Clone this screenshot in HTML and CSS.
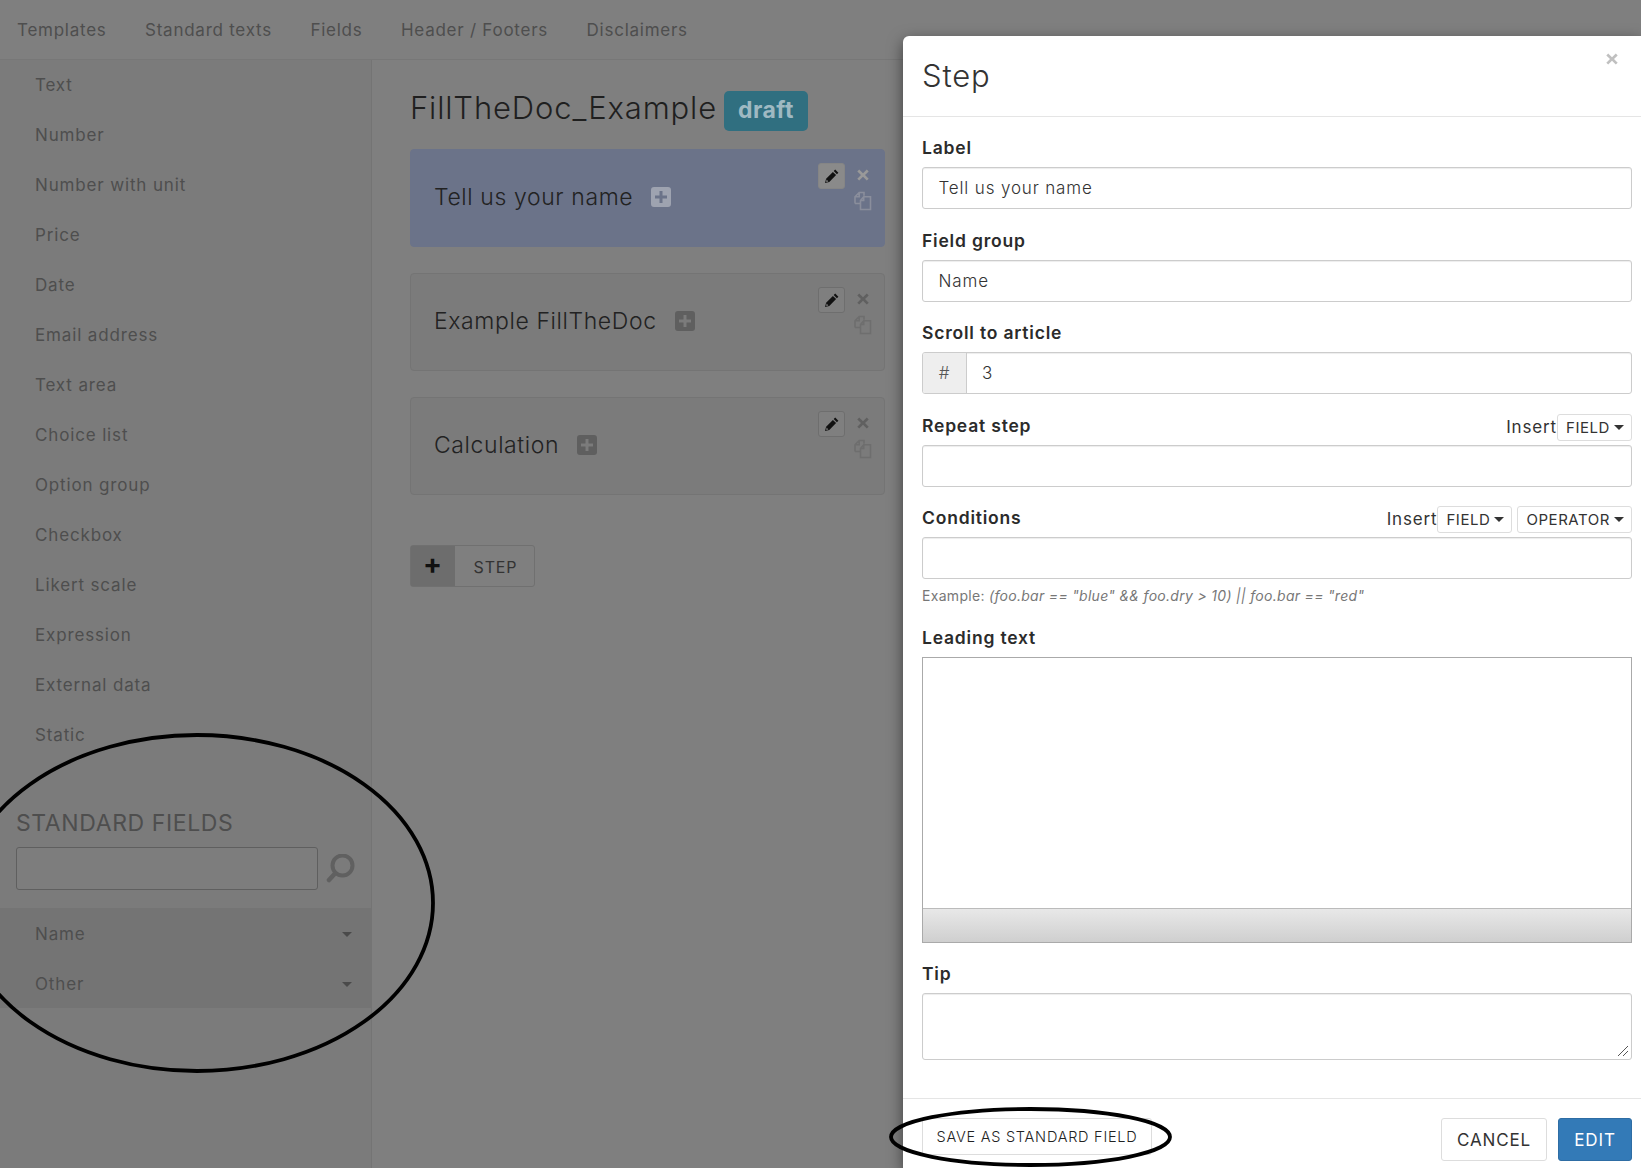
FILE: index.html
```html
<!DOCTYPE html>
<html lang="en">
<head>
<meta charset="utf-8">
<title>FillTheDoc - Step</title>
<link rel="stylesheet" href="styles.css">
</head>
<body>
<svg class="defs" width="0" height="0" aria-hidden="true">
  <symbol id="pencil" viewBox="0 0 16 16"><path d="M11.200 1.600l3.200 3.200-1.500 1.500-3.200-3.200zM8.900 3.900l3.200 3.200-6.800 6.800-4.300 1.100 1.100-4.300zM2.600 11.600l1.800 1.800-2.200.5z" fill-rule="evenodd"/></symbol>
  <symbol id="times" viewBox="0 0 14 14"><path d="M3.200 1.500L7 5.200l3.800-3.700 1.900 1.900L9 7l3.700 3.700-1.900 1.800L7 8.800l-3.800 3.700-1.900-1.800L5 7 1.300 3.400z"/></symbol>
  <symbol id="copy" viewBox="0 0 20 20"><path d="M2 12.500V5.800L6.200 1.500H11v3.200M6.200 1.500v4.300H2M2 12.500h5" fill="none" stroke="currentColor" stroke-width="1.600"/><path d="M7.500 18.500V9.500l3.200-3.700h6.800v12.700zM10.700 5.800v3.700H7.500" fill="none" stroke="currentColor" stroke-width="1.600"/></symbol>
  <symbol id="plus" viewBox="0 0 20 20"><path fill-rule="evenodd" d="M3 0h14a3 3 0 0 1 3 3v14a3 3 0 0 1-3 3H3a3 3 0 0 1-3-3V3a3 3 0 0 1 3-3zm5.500 4v4.500H4v3h4.500V16h3v-4.500H16v-3h-4.500V4z"/></symbol>
</svg>

<div class="app">
  <nav class="topnav">
    <a>Templates</a><a>Standard texts</a><a>Fields</a><a>Header / Footers</a><a>Disclaimers</a>
  </nav>
  <div class="workspace">
    <aside class="sidebar">
      <ul class="types">
        <li>Text</li><li>Number</li><li>Number with unit</li><li>Price</li><li>Date</li><li>Email address</li><li>Text area</li><li>Choice list</li><li>Option group</li><li>Checkbox</li><li>Likert scale</li><li>Expression</li><li>External data</li><li>Static</li>
      </ul>
      <div class="std">
        <h3 class="std-title">STANDARD FIELDS</h3>
        <div class="std-search">
          <div class="std-input"></div>
          <svg class="search-icon" viewBox="0 0 30 30"><circle cx="16.500" cy="11.500" r="10" fill="none" stroke="currentColor" stroke-width="4"/><path d="M9 19.500L3 26" stroke="currentColor" stroke-width="4.500" stroke-linecap="round"/></svg>
        </div>
        <ul class="groups">
          <li>Name<i class="caret"></i></li>
          <li>Other<i class="caret"></i></li>
        </ul>
      </div>
    </aside>
    <main class="main">
      <div class="doc-title"><h1>FillTheDoc_Example</h1><span class="badge">draft</span></div>
      <section class="step is-active">
        <div class="step-name">Tell us your name<svg class="step-plus"><use href="#plus"/></svg></div>
        <div class="step-tools">
          <span class="tool-edit"><svg><use href="#pencil"/></svg></span>
          <div class="tool-col"><svg class="tool-x"><use href="#times"/></svg><svg class="tool-copy"><use href="#copy"/></svg></div>
        </div>
      </section>
      <section class="step">
        <div class="step-name">Example FillTheDoc<svg class="step-plus"><use href="#plus"/></svg></div>
        <div class="step-tools">
          <span class="tool-edit"><svg><use href="#pencil"/></svg></span>
          <div class="tool-col"><svg class="tool-x"><use href="#times"/></svg><svg class="tool-copy"><use href="#copy"/></svg></div>
        </div>
      </section>
      <section class="step">
        <div class="step-name">Calculation<svg class="step-plus"><use href="#plus"/></svg></div>
        <div class="step-tools">
          <span class="tool-edit"><svg><use href="#pencil"/></svg></span>
          <div class="tool-col"><svg class="tool-x"><use href="#times"/></svg><svg class="tool-copy"><use href="#copy"/></svg></div>
        </div>
      </section>
      <div class="add-step"><span class="add-icon">+</span><span class="add-label">STEP</span></div>
    </main>
  </div>
</div>

<div class="modal">
  <header class="modal-head"><h2>Step</h2><svg class="modal-close"><use href="#times"/></svg></header>
  <div class="modal-body">
    <div class="field">
      <div class="field-head"><label>Label</label></div>
      <div class="control">Tell us your name</div>
    </div>
    <div class="field">
      <div class="field-head"><label>Field group</label></div>
      <div class="control">Name</div>
    </div>
    <div class="field">
      <div class="field-head"><label>Scroll to article</label></div>
      <div class="control control-group"><span class="addon">#</span><span class="addon-value">3</span></div>
    </div>
    <div class="field">
      <div class="field-head"><label>Repeat step</label>
        <div class="inserts"><span class="insert-word">Insert</span><span class="mini-btn">FIELD<i class="caret dark"></i></span></div>
      </div>
      <div class="control"></div>
    </div>
    <div class="field field-help">
      <div class="field-head"><label>Conditions</label>
        <div class="inserts"><span class="insert-word">Insert</span><span class="mini-btn">FIELD<i class="caret dark"></i></span><span class="mini-btn spaced">OPERATOR<i class="caret dark"></i></span></div>
      </div>
      <div class="control"></div>
      <p class="help">Example: <em>(foo.bar == "blue" &amp;&amp; foo.dry &gt; 10) || foo.bar == "red"</em></p>
    </div>
    <div class="field">
      <div class="field-head"><label>Leading text</label></div>
      <div class="editor"><div class="editor-area"></div><div class="editor-bar"></div></div>
    </div>
    <div class="field">
      <div class="field-head"><label>Tip</label></div>
      <div class="control control-tip">
        <svg class="grip" viewBox="0 0 12 12"><path d="M1 11L11 1M6 11l5-5" stroke="#555" stroke-width="1" fill="none"/></svg>
      </div>
    </div>
  </div>
  <footer class="modal-foot">
    <span class="btn btn-save">SAVE AS STANDARD FIELD</span>
    <div class="foot-actions"><span class="btn btn-cancel">CANCEL</span><span class="btn btn-edit">EDIT</span></div>
  </footer>
</div>

<svg class="mark mark-left" viewBox="0 0 476 340"><ellipse cx="238" cy="170" rx="236" ry="168"/></svg>
<svg class="mark mark-save" viewBox="0 0 283 60"><ellipse cx="141.500" cy="30" rx="139.500" ry="28"/></svg>
</body>
</html>
```

FILE: styles.css
```css
* { box-sizing: border-box; }
html, body { margin: 0; height: 100%; }
body {
  position: relative;
  width: 1641px;
  height: 1168px;
  overflow: hidden;
  background: #7f7f7f;
  color: #4e4e4e;
  font-family: Inter, "Open Sans", sans-serif;
  font-size: 17px;
  letter-spacing: 0.85px;
}
.defs { position: absolute; }
h1, h2, h3, p, ul { margin: 0; padding: 0; }
ul { list-style: none; }

.app { display: flex; flex-direction: column; height: 100%; }
.topnav {
  display: flex;
  gap: 38.500px;
  height: 60px;
  padding: 0 17px;
  align-items: center;
  border-bottom: 1px solid #777;
  letter-spacing: 0.75px;
}
.workspace { display: flex; flex: 1; }
.sidebar {
  width: 372px;
  background: #7b7b7b;
  border-right: 1px solid #747474;
  display: flex;
  flex-direction: column;
}
.types li { height: 50px; padding-left: 35px; line-height: 50px; }
.std-title {
  margin: 48px 0 0 16px;
  font-size: 23px;
  font-weight: 400;
  line-height: 30px;
  letter-spacing: 0.6px;
}
.std-search { display: flex; align-items: center; gap: 8px; margin: 9px 0 0 16px; }
.std-input { width: 302px; height: 43px; border: 1px solid #5f5f5f; border-radius: 3px; background: #7d7d7d; }
.search-icon { width: 30px; height: 30px; color: #606060; }
.groups { margin-top: 18px; background: #747474; }
.groups li {
  height: 50px;
  padding: 2px 19px 0 35px;
  display: flex;
  justify-content: space-between;
  align-items: center;
}
.caret {
  display: inline-block;
  width: 0;
  height: 0;
  border-left: 5px solid transparent;
  border-right: 5px solid transparent;
  border-top: 5px solid #4a4a4a;
}
.caret.dark { border-top-color: #333; margin-left: 4px; }

.main { flex: 1; padding: 31px 0 0 38px; }
.doc-title { display: flex; align-items: flex-start; gap: 7px; height: 40px; margin-bottom: 18px; }
.doc-title h1 { font-size: 31px; font-weight: 300; line-height: 34px; color: #1f1f1f; letter-spacing: 0.85px; }
.badge {
  display: block;
  padding: 0 14px;
  height: 40px;
  line-height: 38px;
  background: #306f80;
  color: #9fb9c2;
  border-radius: 5px;
  font-size: 23px;
  font-weight: 700;
  letter-spacing: 0.5px;
}
.step {
  position: relative;
  display: flex;
  justify-content: space-between;
  width: 475px;
  height: 98px;
  margin-bottom: 26px;
  padding: 13px 11px 0 23px;
  border: 1px solid #747474;
  border-radius: 4px;
  background: #7b7b7b;
}
.step.is-active { background: #6b7389; border-color: #6b7389; }
.step-name {
  display: flex;
  align-items: center;
  height: 68px;
  font-size: 23px;
  font-weight: 300;
  letter-spacing: 0.6px;
  color: #222;
}
.step-plus { width: 20px; height: 20px; margin-left: 18px; fill: #9ea3b0; }
.step:not(.is-active) .step-plus { fill: #5f5f5f; }
.step-tools { display: flex; gap: 8px; }
.tool-edit {
  width: 27px;
  height: 26px;
  background: #7f7f7f;
  border: 1px solid #6e6e6e;
  border-radius: 3px;
  display: flex;
  align-items: center;
  justify-content: center;
  color: #111;
}
.is-active .tool-edit { background: #8a8a8a; border-color: #858585; }
.tool-edit svg { width: 16px; height: 16px; fill: #111; }
.tool-col { display: flex; flex-direction: column; align-items: center; gap: 9px; padding-top: 5px; width: 20px; }
.tool-x { width: 14px; height: 14px; fill: #606060; }
.tool-copy { width: 20px; height: 20px; color: #6e6e6e; }
.is-active .tool-x { fill: #999; }
.is-active .tool-copy { color: #8a8e9c; }
.add-step {
  display: flex;
  width: 125px;
  height: 42px;
  margin-top: 50px;
  border: 1px solid #707070;
  border-radius: 3px;
}
.add-icon { width: 44px; background: #6d6d6d; color: #111; font-size: 28px; font-weight: 700; text-align: center; line-height: 36px; }
.add-label { flex: 1; padding-left: 2px; text-align: center; line-height: 42px; font-size: 16px; color: #333; }

.modal {
  position: absolute;
  left: 903px;
  top: 36px;
  right: 0;
  bottom: 0;
  background: #fff;
  border-radius: 6px 0 0 0;
  box-shadow: 0 5px 15px rgba(0, 0, 0, .5);
  color: #333;
  display: flex;
  flex-direction: column;
}
.modal-head {
  position: relative;
  height: 81px;
  padding: 0 19px 2px;
  display: flex;
  align-items: center;
  border-bottom: 1px solid #e5e5e5;
}
.modal-head h2 { font-size: 31px; font-weight: 300; letter-spacing: 0.8px; }
.modal-close { position: absolute; top: 16px; right: 22px; width: 14px; height: 14px; fill: #c0c0c0; }
.modal-body { padding: 18px 9px 0 19px; }
.field { margin-bottom: 18.500px; }
.field-help { margin-bottom: 19px; }
.field-head { display: flex; justify-content: space-between; height: 27px; margin-bottom: 5px; }
.field-head label { font-size: 17.500px; font-weight: 600; line-height: 25px; letter-spacing: 0.8px; color: #2b2b2b; }
.inserts { display: flex; align-items: flex-start; padding-top: 1px; }
.insert-word { font-size: 17px; color: #333; line-height: 26px; }
.mini-btn {
  display: flex;
  align-items: center;
  height: 27px;
  padding: 0 7px 0 8px;
  border: 1px solid #ddd;
  border-radius: 3px;
  font-size: 15px;
  letter-spacing: 0.55px;
  color: #333;
}
.mini-btn.spaced { margin-left: 5px; }
.control {
  position: relative;
  height: 42px;
  padding: 0 15.500px;
  display: flex;
  align-items: center;
  border: 1px solid #ccc;
  border-radius: 3px;
  box-shadow: inset 0 1px 1px rgba(0, 0, 0, .075);
  font-size: 17px;
  font-weight: 300;
}
.control-group { padding: 0; overflow: hidden; }
.addon { width: 44px; height: 100%; background: #eee; border-right: 1px solid #ccc; display: flex; align-items: center; justify-content: center; color: #555; }
.addon-value { padding-left: 15px; }
.help { margin-top: 6.500px; height: 20px; line-height: 20px; font-size: 14px; letter-spacing: 0.3px; color: #777; }
.editor { height: 286px; border: 1px solid #aaa; display: flex; flex-direction: column; }
.editor-area { flex: 1; }
.editor-bar { height: 34px; border-top: 1px solid #bbb; background: linear-gradient(#e8e8e8, #cfcfcf); }
.control-tip { height: 67px; }
.grip { position: absolute; right: 2px; bottom: 2px; width: 12px; height: 12px; }

.modal-foot {
  margin-top: 19px;
  padding: 19px 9px 0 19px;
  display: flex;
  justify-content: space-between;
  align-items: flex-start;
  border-top: 1px solid #e5e5e5;
}
.foot-actions { display: flex; gap: 11px; }
.btn { display: flex; align-items: center; justify-content: center; border: 1px solid #ddd; border-radius: 3px; }
.btn-save { width: 230px; height: 37px; font-size: 14.500px; font-weight: 300; letter-spacing: 0.75px; color: #222; }
.btn-cancel { width: 106px; height: 43px; padding-top: 2px; font-size: 17px; color: #333; }
.btn-edit { width: 74px; height: 43px; padding-top: 2px; font-size: 17px; color: #fff; background: #337ab7; border-color: #2e6da4; }

.mark { position: absolute; fill: none; stroke: #000; stroke-width: 3.800px; }
.mark-left { left: -41px; top: 733px; width: 476px; height: 340px; }
.mark-save { left: 889px; top: 1107px; width: 283px; height: 60px; }
```
